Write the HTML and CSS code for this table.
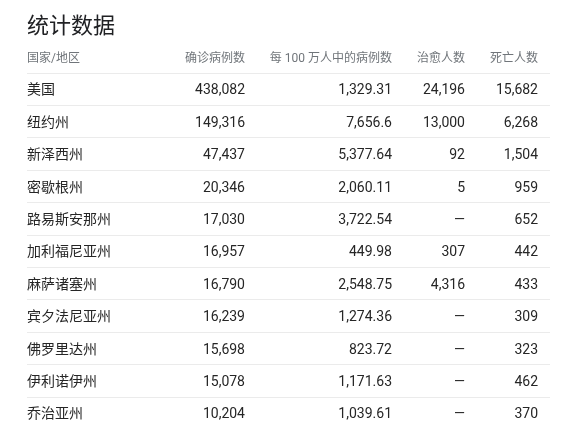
FILE: index.html
```html
<!DOCTYPE html>
<html>
<head>
<meta charset="utf-8">
<link rel="stylesheet" href="styles.css">
</head>
<body>
<div class="panel">
  <h1 class="title">统计数据</h1>
  <div class="table">
    <div class="row head">
      <div class="cell name">国家/地区</div>
      <div class="cell">确诊病例数</div>
      <div class="cell">每 100 万人中的病例数</div>
      <div class="cell">治愈人数</div>
      <div class="cell">死亡人数</div>
    </div>
    <div class="row"><div class="cell name">美国</div><div class="cell">438,082</div><div class="cell">1,329.31</div><div class="cell">24,196</div><div class="cell">15,682</div></div>
    <div class="row"><div class="cell name">纽约州</div><div class="cell">149,316</div><div class="cell">7,656.6</div><div class="cell">13,000</div><div class="cell">6,268</div></div>
    <div class="row"><div class="cell name">新泽西州</div><div class="cell">47,437</div><div class="cell">5,377.64</div><div class="cell">92</div><div class="cell">1,504</div></div>
    <div class="row"><div class="cell name">密歇根州</div><div class="cell">20,346</div><div class="cell">2,060.11</div><div class="cell">5</div><div class="cell">959</div></div>
    <div class="row"><div class="cell name">路易斯安那州</div><div class="cell">17,030</div><div class="cell">3,722.54</div><div class="cell dash">—</div><div class="cell">652</div></div>
    <div class="row"><div class="cell name">加利福尼亚州</div><div class="cell">16,957</div><div class="cell">449.98</div><div class="cell">307</div><div class="cell">442</div></div>
    <div class="row"><div class="cell name">麻萨诸塞州</div><div class="cell">16,790</div><div class="cell">2,548.75</div><div class="cell">4,316</div><div class="cell">433</div></div>
    <div class="row"><div class="cell name">宾夕法尼亚州</div><div class="cell">16,239</div><div class="cell">1,274.36</div><div class="cell dash">—</div><div class="cell">309</div></div>
    <div class="row"><div class="cell name">佛罗里达州</div><div class="cell">15,698</div><div class="cell">823.72</div><div class="cell dash">—</div><div class="cell">323</div></div>
    <div class="row"><div class="cell name">伊利诺伊州</div><div class="cell">15,078</div><div class="cell">1,171.63</div><div class="cell dash">—</div><div class="cell">462</div></div>
    <div class="row last"><div class="cell name">乔治亚州</div><div class="cell">10,204</div><div class="cell">1,039.61</div><div class="cell dash">—</div><div class="cell">370</div></div>
  </div>
</div>
</body>
</html>
```
FILE: styles.css
```css
html, body {
  margin: 0;
  padding: 0;
  background: #ffffff;
}
body {
  font-family: Roboto, "Noto Sans CJK SC", sans-serif;
  color: #202124;
}
.panel {
  padding: 10px 0 0 27px;
  width: 523px;
  will-change: transform;
}
.title {
  margin: 0;
  font-size: 22px;
  font-weight: 400;
  line-height: 32px;
  color: #202124;
}
.table {
  margin-top: 6px;
}
.row {
  display: grid;
  grid-template-columns: 123px 95px 147px 73px 73px;
  padding-right: 12px;
  border-bottom: 1px solid #ebebeb;
  height: 31.4px;
  align-items: center;
  font-size: 14px;
  line-height: 20px;
  color: #262626;
}
.row.head {
  height: 24.7px;
  align-items: start;
  font-size: 12px;
  color: #70757a;
}
.row.last {
  border-bottom: none;
}
.cell {
  text-align: right;
  white-space: nowrap;
}
.cell.name {
  text-align: left;
}
```
